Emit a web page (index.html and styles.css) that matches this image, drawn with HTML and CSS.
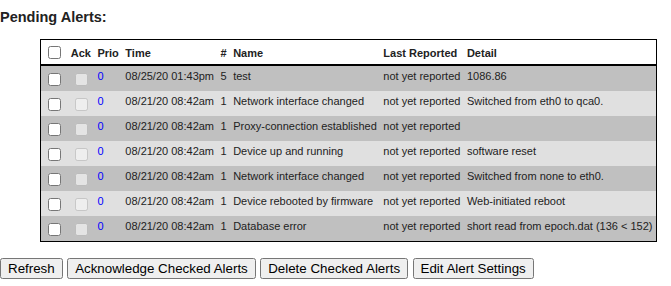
FILE: index.html
```html
<!DOCTYPE html>
<html>
<head>
    <meta charset="UTF-8">
    <title>Pending Alerts</title>
    <link rel="stylesheet" href="styles.css">
</head>
<body>
    <h3 class="pageTitle">Pending Alerts:</h3>
    <form id="alertsForm">
        <table class="alerts">
            <thead>
                <tr>
                    <th><input type="checkbox" id="checkAll"></th>
                    <th>Ack</th>
                    <th>Prio</th>
                    <th>Time</th>
                    <th>#</th>
                    <th>Name</th>
                    <th>Last Reported</th>
                    <th>Detail</th>
                </tr>
            </thead>
            <tbody>
                <tr class="dark">
                    <td><input type="checkbox"></td>
                    <td><input type="checkbox" disabled></td>
                    <td><a class="prio">0</a></td>
                    <td>08/25/20 01:43pm</td>
                    <td>5</td>
                    <td>test</td>
                    <td>not yet reported</td>
                    <td>1086.86</td>
                </tr>
                <tr class="light">
                    <td><input type="checkbox"></td>
                    <td><input type="checkbox" disabled></td>
                    <td><a class="prio">0</a></td>
                    <td>08/21/20 08:42am</td>
                    <td>1</td>
                    <td>Network interface changed</td>
                    <td>not yet reported</td>
                    <td>Switched from eth0 to qca0.</td>
                </tr>
                <tr class="dark">
                    <td><input type="checkbox"></td>
                    <td><input type="checkbox" disabled></td>
                    <td><a class="prio">0</a></td>
                    <td>08/21/20 08:42am</td>
                    <td>1</td>
                    <td>Proxy-connection established</td>
                    <td>not yet reported</td>
                    <td></td>
                </tr>
                <tr class="light">
                    <td><input type="checkbox"></td>
                    <td><input type="checkbox" disabled></td>
                    <td><a class="prio">0</a></td>
                    <td>08/21/20 08:42am</td>
                    <td>1</td>
                    <td>Device up and running</td>
                    <td>not yet reported</td>
                    <td>software reset</td>
                </tr>
                <tr class="dark">
                    <td><input type="checkbox"></td>
                    <td><input type="checkbox" disabled></td>
                    <td><a class="prio">0</a></td>
                    <td>08/21/20 08:42am</td>
                    <td>1</td>
                    <td>Network interface changed</td>
                    <td>not yet reported</td>
                    <td>Switched from none to eth0.</td>
                </tr>
                <tr class="light">
                    <td><input type="checkbox"></td>
                    <td><input type="checkbox" disabled></td>
                    <td><a class="prio">0</a></td>
                    <td>08/21/20 08:42am</td>
                    <td>1</td>
                    <td>Device rebooted by firmware</td>
                    <td>not yet reported</td>
                    <td>Web-initiated reboot</td>
                </tr>
                <tr class="dark">
                    <td><input type="checkbox"></td>
                    <td><input type="checkbox" disabled></td>
                    <td><a class="prio">0</a></td>
                    <td>08/21/20 08:42am</td>
                    <td>1</td>
                    <td>Database error</td>
                    <td>not yet reported</td>
                    <td>short read from epoch.dat (136 &lt; 152)</td>
                </tr>
            </tbody>
        </table>
        <div class="actions">
            <button type="button">Refresh</button>
            <button type="button">Acknowledge Checked Alerts</button>
            <button type="button">Delete Checked Alerts</button>
            <button type="button">Edit Alert Settings</button>
        </div>
    </form>
</body>
</html>
```

FILE: styles.css
```css
body {
    margin: 0;
    font-family: "Liberation Sans", Arial, sans-serif;
    color: #222;
    background: white;
}
.pageTitle {
    font-size: 14.5px;
    font-weight: bold;
    margin: 9px 0 14px 0;
}
.alerts {
    margin-left: 40px;
    border: 1px solid black;
    border-spacing: 0;
    font-size: 11px;
}
.alerts th {
    text-align: left;
    padding: 3px 3.25px 2px 3.25px;
    white-space: nowrap;
    border-bottom: 2px solid black;
}
.alerts td {
    padding: 4px 3.25px 2px 3.25px;
    vertical-align: top;
    white-space: nowrap;
}
.alerts input {
    margin: 3px 3px 3px 4px;
}
.dark {
    background-color: #c0c0c0;
}
.light {
    background-color: #e0e0e0;
}
.prio {
    color: blue;
    text-decoration: none;
}
.actions {
    margin-top: 16px;
}
.actions button {
    font-family: "Liberation Sans", Arial, sans-serif;
    font-size: 13.33px;
}
```
